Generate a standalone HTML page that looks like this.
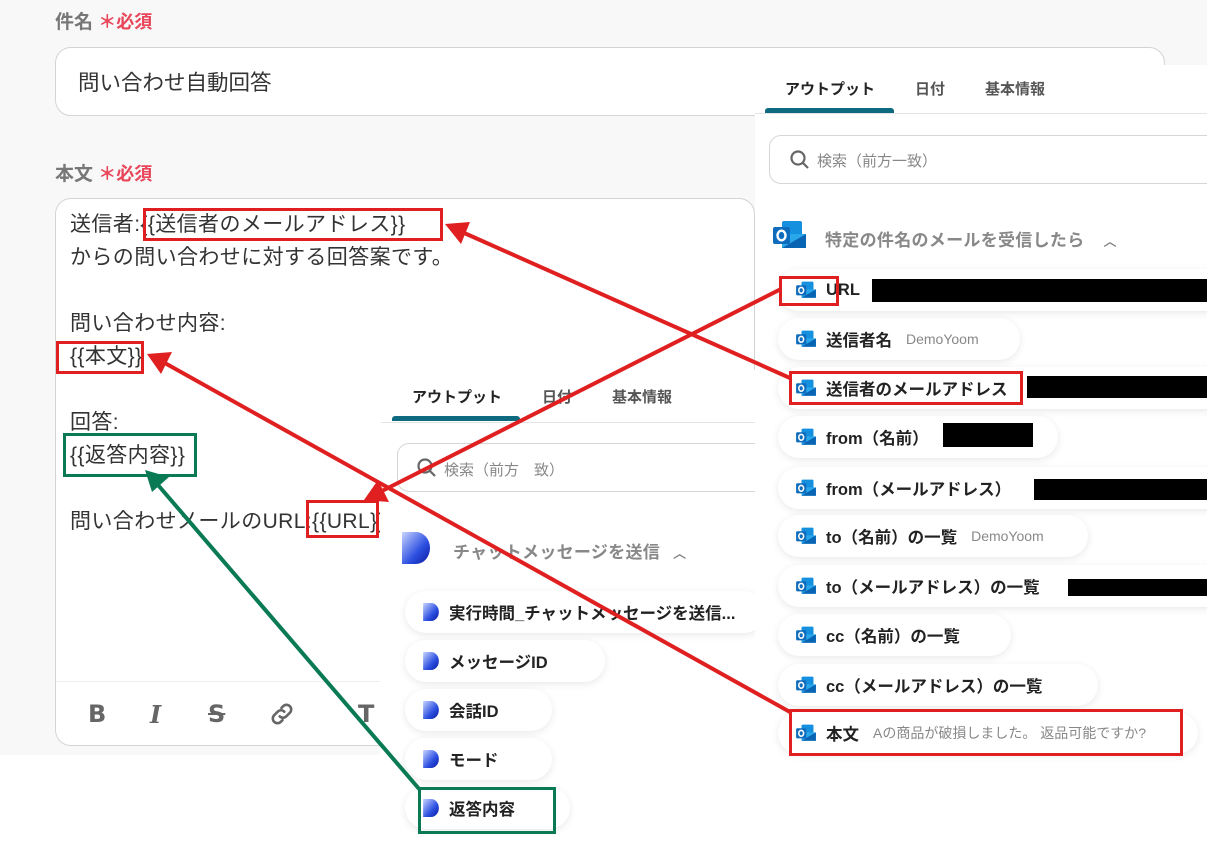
<!DOCTYPE html>
<html><head><meta charset="utf-8">
<style>
*{box-sizing:border-box;margin:0;padding:0}
body{width:1207px;height:855px;position:relative;overflow:hidden;background:#fff;font-family:"Liberation Sans","Noto Sans CJK JP",sans-serif;}
.abs{position:absolute}
.bg{left:0;top:0;width:1207px;height:755px;background:#f8f8f8}
.lbl{font-size:19px;font-weight:bold;color:#777;white-space:nowrap}
.lbl .r{color:#e8455a;font-size:18px}
.box{background:#fff;border:1px solid #d4d4d4;border-radius:16px}
.body-t{font-size:21px;letter-spacing:0.4px;color:#333;line-height:33px;white-space:nowrap}
.panel{background:#fff}
.tab{font-size:15px;font-weight:bold;color:#555;white-space:nowrap}
.tab.a{color:#222}
.search{border:1px solid #d6d6d6;border-radius:12px;background:#fff}
.stxt{font-size:15px;color:#888;white-space:nowrap}
.hdr{font-size:17px;letter-spacing:0.3px;font-weight:bold;color:#888;white-space:nowrap}
.pill{position:absolute;height:42px;border-radius:21px;background:#fff;box-shadow:0 2px 8px rgba(0,0,0,.09);display:flex;align-items:center;padding-left:18px;white-space:nowrap;font-size:16.5px;font-weight:bold;color:#222}
.pill .v{font-weight:normal;color:#888;font-size:14px;margin-left:14px}
.pill svg{margin-right:10px;flex:none}
.blk{position:absolute;background:#000}
.rb{position:absolute;border:3px solid #e02020}
.gb{position:absolute;border:3px solid #0a7a55}
.tb{position:absolute;font-size:24px;color:#666;font-weight:bold}
</style></head><body>
<div class="abs bg"></div>
<div class="abs lbl" style="left:55px;top:7px">件名 <span class="r">＊</span><span class="r">必須</span></div>
<div class="abs box" style="left:55px;top:47px;width:1110px;height:69px"></div>
<div class="abs" style="left:78px;top:66px;font-size:21.5px;color:#333">問い合わせ自動回答</div>
<div class="abs lbl" style="left:55px;top:159px">本文 <span class="r">＊</span><span class="r">必須</span></div>
<div class="abs box" style="left:55px;top:198px;width:700px;height:548px"></div>
<div class="abs" style="left:56px;top:681px;width:330px;height:1px;background:#eee"></div>
<div class="abs body-t" style="left:70px;top:208px">送信者:{{送信者のメールアドレス}}<br>からの問い合わせに対する回答案です。<br><br>問い合わせ内容:<br>{{本文}}<br><br>回答:<br>{{返答内容}}<br><br>問い合わせメールのURL:{{URL}}</div>
<div class="tb" style="left:88px;top:700px;font-family:'DejaVu Sans',sans-serif">B</div>
<div class="tb" style="left:150px;top:700px;font-style:italic;font-family:'DejaVu Serif',serif">I</div>
<div class="tb" style="left:208px;top:700px;text-decoration:line-through;font-family:'DejaVu Sans',sans-serif">S</div>
<svg class="abs" style="left:268px;top:700px" width="28" height="28" viewBox="0 0 24 24" fill="none" stroke="#666" stroke-width="2.2" stroke-linecap="round"><path d="M10 14a4 4 0 0 0 5.7 0l3-3a4 4 0 0 0-5.7-5.7l-1.5 1.5"/><path d="M14 10a4 4 0 0 0-5.7 0l-3 3a4 4 0 0 0 5.7 5.7l1.5-1.5"/></svg>
<div class="tb" style="left:358px;top:700px;font-family:'DejaVu Sans',sans-serif">T</div>

<!-- middle panel -->
<div class="abs panel" style="left:380px;top:370px;width:376px;height:456px"></div>
<div class="abs tab a" style="left:412px;top:386px">アウトプット</div>
<div class="abs tab" style="left:542px;top:386px">日付</div>
<div class="abs tab" style="left:612px;top:386px">基本情報</div>
<div class="abs" style="left:381px;top:422px;width:375px;height:1px;background:#e4e4e4"></div>
<div class="abs" style="left:392px;top:416px;width:128px;height:5px;background:#0e6a7e;border-radius:3px 3px 0 0"></div>
<div class="abs search" style="left:397px;top:443px;width:380px;height:49px"></div>
<svg class="abs" style="left:416px;top:457px" width="22" height="22" viewBox="0 0 22 22" fill="none" stroke="#666" stroke-width="2.2"><circle cx="9" cy="9" r="6.5"/><path d="M14 14l5 5"/></svg>
<div class="abs stxt" style="left:444px;top:459px">検索（前方　致）</div>
<svg class="abs" style="left:402px;top:532px" width="28" height="32" viewBox="0 0 28 32"><defs><linearGradient id="dg" x1="0" y1="0" x2="1" y2="1"><stop offset="0" stop-color="#c8d4ff"/><stop offset=".6" stop-color="#2c4fe0"/><stop offset="1" stop-color="#0a1aa0"/></linearGradient></defs><path d="M0 0h14a14 16 0 0 1 0 32H0z" fill="url(#dg)"/></svg>
<div class="abs hdr" style="left:453px;top:538px">チャットメッセージを送信 <span style="font-size:13px;margin-left:8px">︿</span></div>
<div class="pill" style="left:405px;top:591px;width:360px"><svg width="16" height="18" viewBox="0 0 28 32"><path d="M0 0h14a14 16 0 0 1 0 32H0z" fill="url(#dg)"/></svg>実行時間_チャットメッセージを送信...</div>
<div class="pill" style="left:405px;top:640px;width:200px"><svg width="16" height="18" viewBox="0 0 28 32"><path d="M0 0h14a14 16 0 0 1 0 32H0z" fill="url(#dg)"/></svg>メッセージID</div>
<div class="pill" style="left:405px;top:689px;width:147px"><svg width="16" height="18" viewBox="0 0 28 32"><path d="M0 0h14a14 16 0 0 1 0 32H0z" fill="url(#dg)"/></svg>会話ID</div>
<div class="pill" style="left:405px;top:738px;width:147px"><svg width="16" height="18" viewBox="0 0 28 32"><path d="M0 0h14a14 16 0 0 1 0 32H0z" fill="url(#dg)"/></svg>モード</div>
<div class="pill" style="left:405px;top:787px;width:165px"><svg width="16" height="18" viewBox="0 0 28 32"><path d="M0 0h14a14 16 0 0 1 0 32H0z" fill="url(#dg)"/></svg>返答内容</div>

<!-- right panel -->
<div class="abs panel" style="left:755px;top:65px;width:452px;height:690px"></div>
<div class="abs tab a" style="left:785px;top:78px">アウトプット</div>
<div class="abs tab" style="left:915px;top:78px">日付</div>
<div class="abs tab" style="left:985px;top:78px">基本情報</div>
<div class="abs" style="left:755px;top:113px;width:452px;height:1px;background:#e4e4e4"></div>
<div class="abs" style="left:765px;top:108px;width:129px;height:5px;background:#0e6a7e;border-radius:3px 3px 0 0"></div>
<div class="abs search" style="left:769px;top:135px;width:460px;height:49px"></div>
<svg class="abs" style="left:789px;top:149px" width="22" height="22" viewBox="0 0 22 22" fill="none" stroke="#666" stroke-width="2.2"><circle cx="9" cy="9" r="6.5"/><path d="M14 14l5 5"/></svg>
<div class="abs stxt" style="left:817px;top:150px">検索（前方一致）</div>
<svg class="abs" style="left:773px;top:220px" width="33" height="30" viewBox="0 0 33 30"><rect x="9" y="1" width="20" height="18" rx="2" fill="#1490df"/><path d="M9 14l24 0 0 14-24 0z" fill="#28a8ea"/><path d="M9 28l24-14v14z" fill="#0a64b4"/><rect x="0" y="7" width="17" height="17" rx="2" fill="#0f6cbd"/><ellipse cx="8.5" cy="15.5" rx="4" ry="4.8" fill="none" stroke="#fff" stroke-width="2.4"/></svg>
<div class="abs hdr" style="left:825px;top:226px">特定の件名のメールを受信したら <span style="font-size:13px;margin-left:14px">︿</span></div>

<div class="pill" style="left:778px;top:269px;width:450px">__O__URL</div>
<div class="pill" style="left:778px;top:318px;width:242px">__O__送信者名<span class="v">DemoYoom</span></div>
<div class="pill" style="left:778px;top:367px;width:450px">__O__送信者のメールアドレス</div>
<div class="pill" style="left:778px;top:416px;width:280px">__O__from（名前）</div>
<div class="pill" style="left:778px;top:467px;width:450px">__O__from（メールアドレス）</div>
<div class="pill" style="left:778px;top:515px;width:310px">__O__to（名前）の一覧<span class="v">DemoYoom</span></div>
<div class="pill" style="left:778px;top:565px;width:450px">__O__to（メールアドレス）の一覧</div>
<div class="pill" style="left:778px;top:614px;width:233px">__O__cc（名前）の一覧</div>
<div class="pill" style="left:778px;top:664px;width:320px">__O__cc（メールアドレス）の一覧</div>
<div class="pill" style="left:778px;top:712px;width:420px">__O__本文<span class="v">Aの商品が破損しました。 返品可能ですか?</span></div>

<div class="blk" style="left:872px;top:279px;width:335px;height:23px"></div>
<div class="blk" style="left:1027px;top:376px;width:180px;height:22px"></div>
<div class="blk" style="left:943px;top:423px;width:90px;height:24px"></div>
<div class="blk" style="left:1034px;top:479px;width:173px;height:21px"></div>
<div class="blk" style="left:1068px;top:579px;width:139px;height:17px"></div>

<div class="abs" style="left:0;top:755px;width:380px;height:100px;background:#fff"></div>

<div class="rb" style="left:143px;top:208px;width:300px;height:33px"></div>
<div class="rb" style="left:56px;top:341px;width:88px;height:33px"></div>
<div class="rb" style="left:306px;top:500px;width:73px;height:38px"></div>
<div class="gb" style="left:63px;top:433px;width:134px;height:44px"></div>
<div class="gb" style="left:418px;top:787px;width:138px;height:47px"></div>
<div class="rb" style="left:779px;top:276px;width:60px;height:30px"></div>
<div class="rb" style="left:789px;top:371px;width:234px;height:34px"></div>
<div class="rb" style="left:789px;top:709px;width:394px;height:47px"></div>

<svg class="abs" style="left:0;top:0" width="1207" height="855">
<g stroke-width="4" fill="none">
<line x1="790" y1="378" x2="462" y2="232" stroke="#e02020"/>
<line x1="781" y1="289" x2="382" y2="491" stroke="#e02020"/>
<line x1="790" y1="712" x2="163" y2="362" stroke="#e02020"/>
<line x1="420" y1="790" x2="158" y2="485" stroke="#0a7a55"/>
</g>
<polygon points="445,224 470,222 461,244" fill="#e02020"/>
<polygon points="364,500 378,480 389,502" fill="#e02020"/>
<polygon points="147,354 172,352 161,374" fill="#e02020"/>
<polygon points="145,470 169,477 152,492" fill="#0a7a55"/>
</svg>
<script>
var o='<svg width="20" height="18" viewBox="0 0 33 30"><rect x="9" y="1" width="20" height="18" rx="2" fill="#1490df"/><path d="M9 14l24 0 0 14-24 0z" fill="#28a8ea"/><path d="M9 28l24-14v14z" fill="#0a64b4"/><rect x="0" y="7" width="17" height="17" rx="2" fill="#0f6cbd"/><ellipse cx="8.5" cy="15.5" rx="4" ry="4.8" fill="none" stroke="#fff" stroke-width="2.6"/></svg>';
document.querySelectorAll('.pill').forEach(function(p){p.innerHTML=p.innerHTML.replace('__O__',o);});
</script>
</body></html>
